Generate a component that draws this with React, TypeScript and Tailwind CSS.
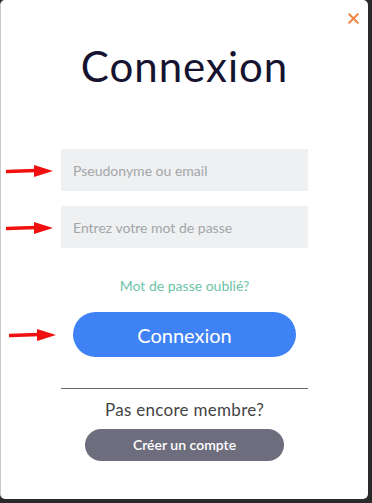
import { X } from "lucide-react";

function Arrow({ className }: { className: string }) {
  return (
    <svg className={className} width="48" height="14" viewBox="0 0 48 14">
      <path d="M1 7.5 L30 6.5" stroke="#f01010" strokeWidth="3.5" strokeLinecap="round" />
      <path d="M28 1 L47 7 L28 13 Z" fill="#f01010" />
    </svg>
  );
}

export default function App() {
  return (
    <div
      className="h-[503px] w-[372px] bg-[#2a2a2a]"
      style={{ fontFamily: "Lato, 'Noto Sans', sans-serif" }}>
      <div className="relative flex h-[499px] w-[368px] flex-col items-center rounded-[5px] border-l border-[#c9c9c9] bg-white">
        <button className="absolute right-[6px] top-[10px] text-[#f0894a]">
          <X size={17} strokeWidth={3} />
        </button>

        <h1 className="mt-[40px] text-[42px] leading-[52px] tracking-[1px] text-[#15132f]">Connexion</h1>

        <div className="mt-[57px] flex w-[247px] flex-col gap-[15px]">
          <input
            className="h-[42px] w-full bg-[#eef0f2] px-[12px] text-[14px] text-[#444] outline-none placeholder:text-[#a3a6a8]"
            placeholder="Pseudonyme ou email"
          />
          <input
            type="password"
            className="h-[42px] w-full bg-[#eef0f2] px-[12px] text-[14px] text-[#444] outline-none placeholder:text-[#a3a6a8]"
            placeholder="Entrez votre mot de passe"
          />
        </div>

        <a className="mt-[27px] text-[14px] text-[#6cc3a7]">Mot de passe oublié?</a>

        <button className="mt-[16px] h-[45px] w-[223px] rounded-full bg-[#3f82f6] text-[20px] text-white">
          Connexion
        </button>

        <div className="mt-[31px] h-px w-[247px] bg-[#6b6b6b]" />

        <p className="mt-[8px] text-[17px] tracking-[0.3px] text-[#444]">Pas encore membre?</p>

        <button className="mt-[6px] h-[32px] w-[199px] rounded-full bg-[#6e6d7e] text-[14px] font-semibold text-white">
          Créer un compte
        </button>

        <Arrow className="absolute left-[5px] top-[164px]" />
        <Arrow className="absolute left-[5px] top-[221px]" />
        <Arrow className="absolute left-[8px] top-[328px]" />
      </div>
    </div>
  );
}
